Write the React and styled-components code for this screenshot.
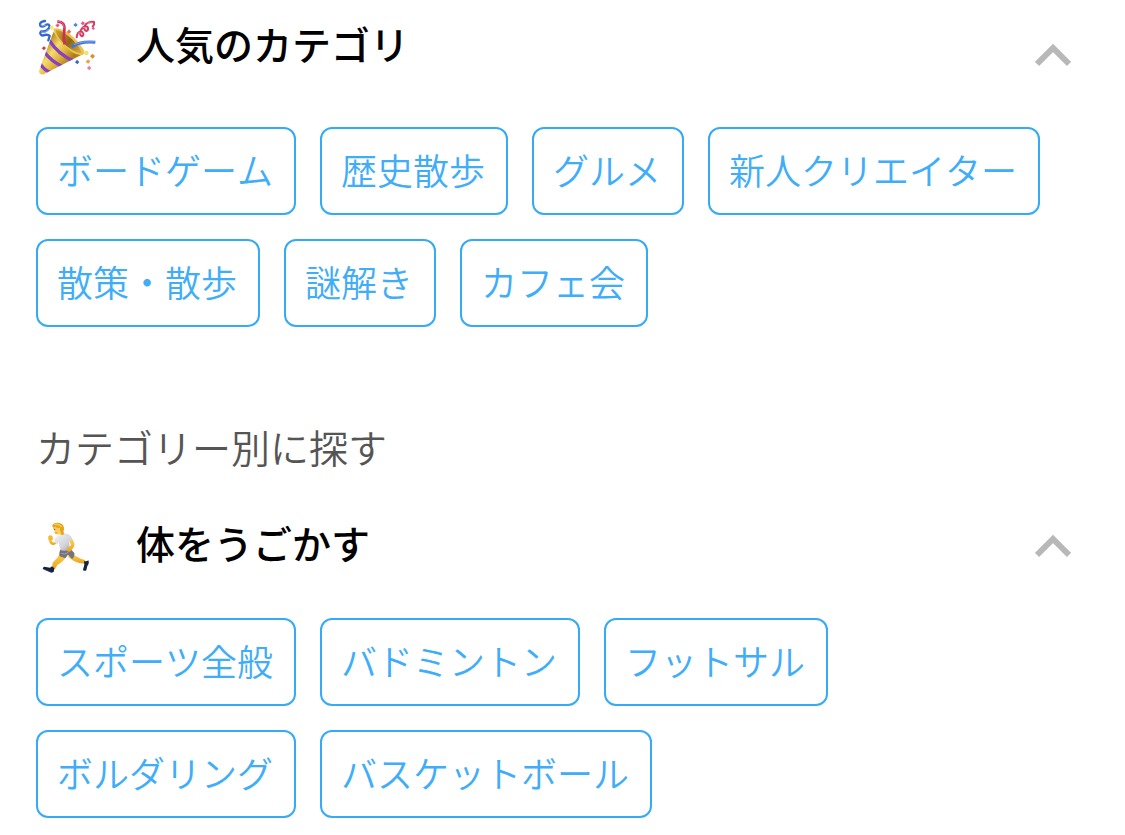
import { useState } from "react"
import styled, { createGlobalStyle } from "styled-components"


const popular = ["ボードゲーム", "歴史散歩", "グルメ", "新人クリエイター", "散策・散歩", "謎解き", "カフェ会"]
const sports = ["スポーツ全般", "バドミントン", "フットサル", "ボルダリング", "バスケットボール"]

const App = () => {
    return(
        <>
            <GlobalStyle />
            <Page>
                <Category title="人気のカテゴリ" icon={<PartyIcon />} items={popular} $align="flex-start" />
                <Subheading>カテゴリー別に探す</Subheading>
                <Category title="体をうごかす" icon={<RunnerIcon />} items={sports} $align="center" />
            </Page>
        </>
    )
}

const Category = ({ title, icon, items, $align }) => {
    const [open, setOpen] = useState(true)

    return(
        <section>
            <Heading>
                <Toggle type="button" aria-expanded={open} onClick={() => setOpen(!open)}>
                    <Label $align={$align}>
                        {icon}
                        <Title>{title}</Title>
                    </Label>
                    <Chevron $open={open} viewBox="0 0 36 24" aria-hidden="true">
                        <path d="M2 21 L18 5 L34 21" fill="none" stroke="#b8b8b8" strokeWidth="6" />
                    </Chevron>
                </Toggle>
            </Heading>
            {open && (
                <Tags>
                    {items.map((item) => (
                        <li key={item}><Tag href="#">{item}</Tag></li>
                    ))}
                </Tags>
            )}
        </section>
    )
}

const PartyIcon = () => (
    <Emoji viewBox="18 21 180 180" aria-hidden="true">
        <defs>
            <linearGradient id="cone" x1="40" y1="110" x2="110" y2="165" gradientUnits="userSpaceOnUse">
                <stop offset="0" stopColor="#b98a1c" />
                <stop offset="0.35" stopColor="#f6dc6a" />
                <stop offset="0.65" stopColor="#e2b53c" />
                <stop offset="1" stopColor="#b07c1c" />
            </linearGradient>
            <linearGradient id="inside" x1="80" y1="70" x2="150" y2="130" gradientUnits="userSpaceOnUse">
                <stop offset="0" stopColor="#c99a2e" />
                <stop offset="0.5" stopColor="#8e6418" />
                <stop offset="1" stopColor="#dcae3c" />
            </linearGradient>
            <clipPath id="coneShape">
                <path d="M70 66 L27 183 Q27 195 41 193 L158 133 Q120 118 70 66Z" />
            </clipPath>
        </defs>
        <path d="M70 66 L27 183 Q27 195 41 193 L158 133 Q120 118 70 66Z" fill="url(#cone)" />
        <g clipPath="url(#coneShape)" fill="none" stroke="#8741c4" strokeWidth="10">
            <path d="M58 91 Q84 132 130 153" />
            <path d="M43 126 Q64 154 98 170" />
            <path d="M29 158 Q40 180 64 188" />
        </g>
        <path d="M70 58 Q76 50 101 61 Q137 80 161 119 Q166 135 153 136 Q126 133 96 101 Q71 76 70 58Z" fill="#e9c453" />
        <path d="M77 61 Q91 59 111 75 Q139 96 154 124 Q155 132 145 128 Q121 120 100 99 Q79 77 77 61Z" fill="url(#inside)" />
        <path d="M82 35 Q106 34 103 61 Q99 81 104 103" fill="none" stroke="#cf2d57" strokeWidth="8" />
        <path d="M84 34 Q102 35 102 55" fill="none" stroke="#ee6a87" strokeWidth="3" />
        <path d="M125 111 Q150 93 196 97" fill="none" stroke="#3f74dc" strokeWidth="9" />
        <path d="M132 103 Q157 93 194 95" fill="none" stroke="#79a6f2" strokeWidth="3" />
        <g fill="none" strokeLinecap="round" strokeLinejoin="round">
            <path d="M45 33 Q26 36 31 47 Q37 54 49 44 Q60 41 58 52 Q50 67 33 64 Q27 72 37 77 Q54 71 59 78 L55 91" stroke="#3766cf" strokeWidth="7" />
            <path d="M33 44 Q36 52 47 45 M34 66 Q47 71 55 58" stroke="#8caef0" strokeWidth="3" />
            <path d="M140 82 Q141 63 157 66 Q164 75 156 79 Q145 73 154 58 Q163 45 173 51 Q177 61 169 63 Q157 57 167 43 Q180 32 192 36 Q194 44 188 50" stroke="#d63b62" strokeWidth="6" />
            <path d="M146 69 L154 69 M160 53 L169 54 M174 39 L185 39" stroke="#f293aa" strokeWidth="3" />
        </g>
        <g fill="#e9578a">
            <path d="M158 34 L165 39 L159 46 L152 41Z" />
            <path d="M83 40 L89 46 L83 52 L76 47Z" />
            <path d="M191 50 L195 56 L189 60 L185 55Z" />
            <path d="M42 109 L48 114 L42 121 L35 115Z" fill="#d83852" />
            <path d="M177 167 L184 174 L178 181 L171 175Z" fill="#ef7d99" />
        </g>
        <g fill="#5381df">
            <path d="M137 38 L143 45 L137 51 L130 45Z" />
            <path d="M141 149 L148 156 L142 163 L135 157Z" fill="#356bc4" />
        </g>
        <path d="M117 58 L124 65 L117 72 L110 66Z" fill="#e27852" />
        <circle cx="65" cy="53" r="6" fill="#f4ea65" />
        <circle cx="169" cy="129" r="7" fill="#f5e267" />
        <path d="M187 131 L195 138 L188 146 L180 139Z" fill="#db8b35" />
        <path d="M174 148 L181 154 L175 161 L167 156Z" fill="#eea13b" />
    </Emoji>
)

const RunnerIcon = () => (
    <Emoji viewBox="18 18 180 180" aria-hidden="true">
        <defs>
            <linearGradient id="shirt" x1="78" y1="75" x2="117" y2="120" gradientUnits="userSpaceOnUse">
                <stop offset="0" stopColor="#eeeef3" />
                <stop offset="0.65" stopColor="#d4d4dc" />
                <stop offset="1" stopColor="#b0b0bb" />
            </linearGradient>
            <linearGradient id="skin" x1="0" y1="0" x2="0" y2="1">
                <stop offset="0" stopColor="#ffd04c" />
                <stop offset="1" stopColor="#e9a41c" />
            </linearGradient>
        </defs>
        <path d="M90 130 Q82 147 68 158 L66 176 L75 178 L82 165 Q103 153 111 136Z" fill="url(#skin)" />
        <path d="M121 130 L137 138 Q151 147 165 150 L165 161 Q146 161 130 152 L114 140Z" fill="url(#skin)" />
        <path d="M91 118 Q86 132 89 139 L106 145 L114 134 L126 147 Q135 140 133 129 L121 116Z" fill="#74747e" />
        <path d="M94 130 Q105 136 115 127" fill="none" stroke="#a0a0aa" strokeWidth="3" />
        <path d="M77 83 L75 95 Q72 100 67 96 L63 90 L57 94 Q60 105 70 105 Q79 105 84 91Z" fill="url(#skin)" />
        <path d="M55 79 Q61 73 67 78 L69 88 Q62 97 55 90Z" fill="#f6b733" />
        <path d="M76 87 Q83 73 96 72 Q112 68 122 78 L128 91 L118 94 Q117 107 121 117 Q106 125 91 120 Q87 107 86 95 L82 103 L75 98Z" fill="url(#shirt)" />
        <path d="M118 93 L127 88 Q136 101 132 110 L122 124 Q113 128 109 120 L112 112 L119 111 L123 104Z" fill="url(#skin)" />
        <path d="M93 65 L100 64 L103 72 Q97 78 90 72Z" fill="#e9a822" />
        <path d="M69 48 Q80 39 95 49 Q99 64 92 70 Q82 78 74 70 L73 62 L69 57Z" fill="#ffcd5c" />
        <path d="M66 48 Q70 37 84 38 Q100 39 102 53 Q103 64 95 69 L90 62 L90 54 Q80 55 75 50 L71 53Z" fill="#e3a71e" />
        <path d="M73 44 Q85 40 95 50" fill="none" stroke="#f7cb4c" strokeWidth="4" />
        <circle cx="74" cy="58" r="2" fill="#715018" />
        <path d="M75 69 L82 68" stroke="#c87f27" strokeWidth="2" />
        <path d="M66 169 L60 173 L43 170 Q36 173 40 178 L64 188 L71 186 L73 175Z" fill="#14213f" />
        <path d="M41 178 L64 186" stroke="#526080" strokeWidth="1" />
        <path d="M162 153 Q170 155 175 151 Q179 160 172 168 L169 181 Q162 185 159 179 L163 164Z" fill="#14213f" />
    </Emoji>
)

const GlobalStyle = createGlobalStyle`
* {
    box-sizing: border-box;
}
body {
    margin: 0;
    background-color: white;
    font-family: "Noto Sans CJK JP", sans-serif;
    font-kerning: none;
}
`

const Page = styled.main`
padding: 17px 36px 16px;
`

const Heading = styled.h2`
margin: 0 0 34px;
`

const Toggle = styled.button`
display: flex;
align-items: center;
justify-content: space-between;
width: 100%;
min-height: 76px;
padding: 0 18px 0 0;
border: none;
background: none;
color: black;
font-family: inherit;
text-align: left;
cursor: pointer;
`

const Label = styled.span`
display: flex;
align-self: ${(props) => props.$align};
align-items: center;
gap: 40px;
`

const Title = styled.span`
padding-bottom: 8px;
font-size: 39px;
font-weight: 500;
line-height: 52px;
`

const Emoji = styled.svg`
flex: none;
width: 60px;
height: 60px;
`

const Chevron = styled.svg`
flex: none;
width: 36px;
height: 24px;
transform: ${(props) => props.$open ? "none" : "rotate(180deg)"};
`

const Subheading = styled.p`
margin: 93px 0 36px;
color: #555;
font-size: 39px;
font-weight: 350;
line-height: 52px;
`

const Tags = styled.ul`
display: flex;
flex-wrap: wrap;
gap: 24px;
margin: 0;
padding: 0;
list-style: none;
`

const Tag = styled.a`
display: block;
padding: 14px 21px 18px 19px;
border: 2px solid #35abf5;
border-radius: 12px;
color: #3fadf7;
font-size: 36px;
font-weight: 350;
line-height: 52px;
text-decoration: none;
`

export default App
